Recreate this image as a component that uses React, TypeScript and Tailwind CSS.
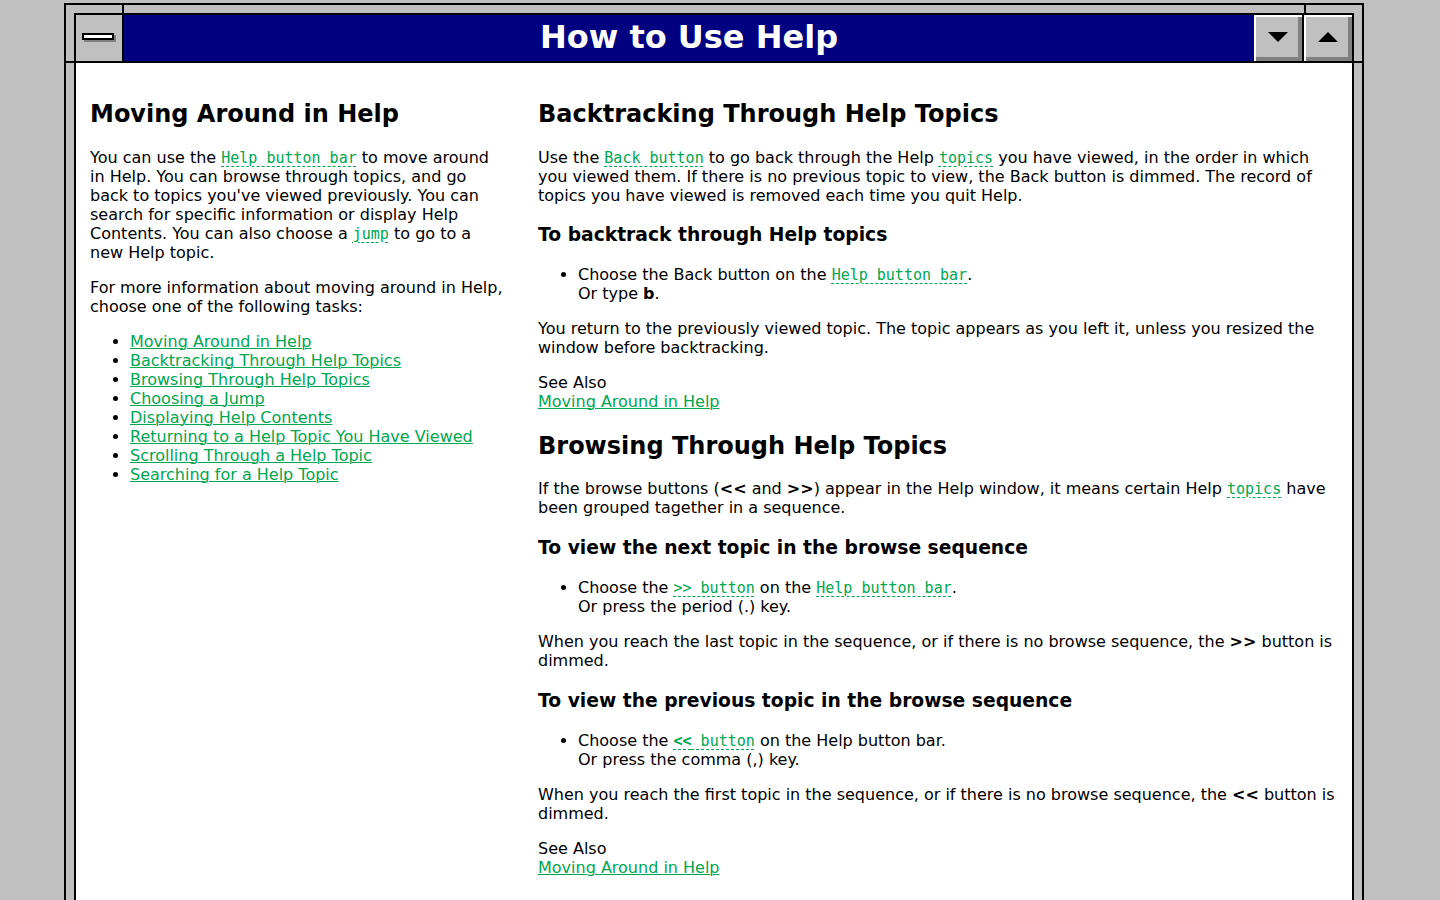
import React from "react";

const sans = "font-['DejaVu_Sans',Verdana,sans-serif]";

function MonoLink({ children }: { children: React.ReactNode }) {
  return (
    <span className="font-['DejaVu_Sans_Mono',monospace] text-[15px] text-[#00a650] underline decoration-dashed decoration-1 underline-offset-[3px]">
      {children}
    </span>
  );
}

function Link({ children }: { children: React.ReactNode }) {
  return <span className="text-[#00a650] underline decoration-1">{children}</span>;
}

function H2({ children, extra = false }: { children: React.ReactNode; extra?: boolean }) {
  return (
    <h2
      className={`text-[24px] font-bold leading-[normal] ${extra ? "mt-[21px] mb-[19.92px]" : "mt-[19.92px] mb-[19.92px]"}`}
    >
      {children}
    </h2>
  );
}

function H3({ children, late = false }: { children: React.ReactNode; late?: boolean }) {
  return (
    <h3 className={`text-[18.72px] font-bold leading-[normal] mb-[20px] ${late ? "mt-[19.8px]" : "mt-[18.72px]"}`}>
      {children}
    </h3>
  );
}

function P({ children }: { children: React.ReactNode }) {
  return <p className="my-[16px]">{children}</p>;
}

function UL({ children }: { children: React.ReactNode }) {
  return <ul className="list-disc pl-[40px] my-[16px]">{children}</ul>;
}

export default function App() {
  const topics = [
    "Moving Around in Help",
    "Backtracking Through Help Topics",
    "Browsing Through Help Topics",
    "Choosing a Jump",
    "Displaying Help Contents",
    "Returning to a Help Topic You Have Viewed",
    "Scrolling Through a Help Topic",
    "Searching for a Help Topic",
  ];
  return (
    <div className={`h-[900px] overflow-hidden bg-[#c0c0c0] pl-[64px] pt-[3px] ${sans}`}>
      <div className="relative w-[1300px] border-2 border-black bg-[#c0c0c0] p-[8px]">
        {/* frame corner marks */}
        <div className="absolute left-[56px] top-0 h-[8px] w-[2px] bg-black" />
        <div className="absolute left-[1238px] top-0 h-[8px] w-[2px] bg-black" />
        <div className="absolute left-0 top-[56px] h-[2px] w-[8px] bg-black" />
        <div className="absolute right-0 top-[56px] h-[2px] w-[8px] bg-black" />

        <div className="border-2 border-black bg-white">
          {/* title row */}
          <div className="flex h-[48px] border-b-2 border-black">
            <div className="flex w-[48px] shrink-0 items-center justify-center border-r-2 border-black bg-[#c0c0c0]">
              <div className="relative -mt-[1px] h-[9px] w-[34px]">
                <div className="absolute left-[2px] top-[2px] h-[7px] w-[32px] bg-[#808080]" />
                <div className="absolute left-0 top-0 h-[7px] w-[32px] border-2 border-black bg-white" />
              </div>
            </div>
            <div className="flex flex-1 items-center justify-center bg-[#000080] pb-[2px]">
              <span className="text-[32px] font-bold leading-[normal] text-white">How to Use Help</span>
            </div>
            <div className="flex w-[48px] shrink-0 items-center justify-center bg-[#c0c0c0] shadow-[inset_2px_2px_0_#ffffff,inset_-4px_-4px_0_#808080]">
              <svg width="20" height="10" viewBox="0 0 20 10" className="-mt-[3px]">
                <polygon points="0,0 20,0 10,10" fill="black" />
              </svg>
            </div>
            <div className="w-[2px] shrink-0 bg-black" />
            <div className="flex w-[48px] shrink-0 items-center justify-center bg-[#c0c0c0] shadow-[inset_2px_2px_0_#ffffff,inset_-4px_-4px_0_#808080]">
              <svg width="20" height="10" viewBox="0 0 20 10" className="-mt-[3px]">
                <polygon points="0,10 20,10 10,0" fill="black" />
              </svg>
            </div>
          </div>

          {/* content */}
          <div className="flex min-h-[900px] gap-[32px] px-[14px] pt-[17px] text-[16px] leading-[normal] text-black">
            <div className="w-[416px] shrink-0">
              <H2>Moving Around in Help</H2>
              <P>
                You can use the <MonoLink>Help button bar</MonoLink> to move around in Help. You can browse
                through topics, and go back to topics you've viewed previously. You can search for specific
                information or display Help Contents. You can also choose a <MonoLink>jump</MonoLink> to go to a
                new Help topic.
              </P>
              <P>For more information about moving around in Help, choose one of the following tasks:</P>
              <UL>
                {topics.map((t) => (
                  <li key={t}>
                    <Link>{t}</Link>
                  </li>
                ))}
              </UL>
            </div>

            <div className="min-w-0 flex-1">
              <H2>Backtracking Through Help Topics</H2>
              <P>
                Use the <MonoLink>Back button</MonoLink> to go back through the Help <MonoLink>topics</MonoLink> you
                have viewed, in the order in which you viewed them. If there is no previous topic to view, the Back
                button is dimmed. The record of topics you have viewed is removed each time you quit Help.
              </P>
              <H3>To backtrack through Help topics</H3>
              <UL>
                <li>
                  Choose the Back button on the <MonoLink>Help button bar</MonoLink>.
                  <br />
                  Or type <b>b</b>.
                </li>
              </UL>
              <P>
                You return to the previously viewed topic. The topic appears as you left it, unless you resized the
                window before backtracking.
              </P>
              <P>
                See Also
                <br />
                <Link>Moving Around in Help</Link>
              </P>

              <H2 extra>Browsing Through Help Topics</H2>
              <P>
                If the browse buttons (<b>&lt;&lt;</b> and <b>&gt;&gt;</b>) appear in the Help window, it means
                certain Help <MonoLink>topics</MonoLink> have been grouped tagether in a sequence.
              </P>
              <H3 late>To view the next topic in the browse sequence</H3>
              <UL>
                <li>
                  Choose the <MonoLink>&gt;&gt; button</MonoLink> on the <MonoLink>Help button bar</MonoLink>.
                  <br />
                  Or press the period (.) key.
                </li>
              </UL>
              <P>
                When you reach the last topic in the sequence, or if there is no browse sequence, the{" "}
                <b>&gt;&gt;</b> button is dimmed.
              </P>
              <H3 late>To view the previous topic in the browse sequence</H3>
              <UL>
                <li>
                  Choose the{" "}
                  <MonoLink>
                    <b>&lt;&lt;</b> button
                  </MonoLink>{" "}
                  on the Help button bar.
                  <br />
                  Or press the comma (,) key.
                </li>
              </UL>
              <P>
                When you reach the first topic in the sequence, or if there is no browse sequence, the{" "}
                <b>&lt;&lt;</b> button is dimmed.
              </P>
              <P>
                See Also
                <br />
                <Link>Moving Around in Help</Link>
              </P>
            </div>
          </div>
        </div>
      </div>
    </div>
  );
}
